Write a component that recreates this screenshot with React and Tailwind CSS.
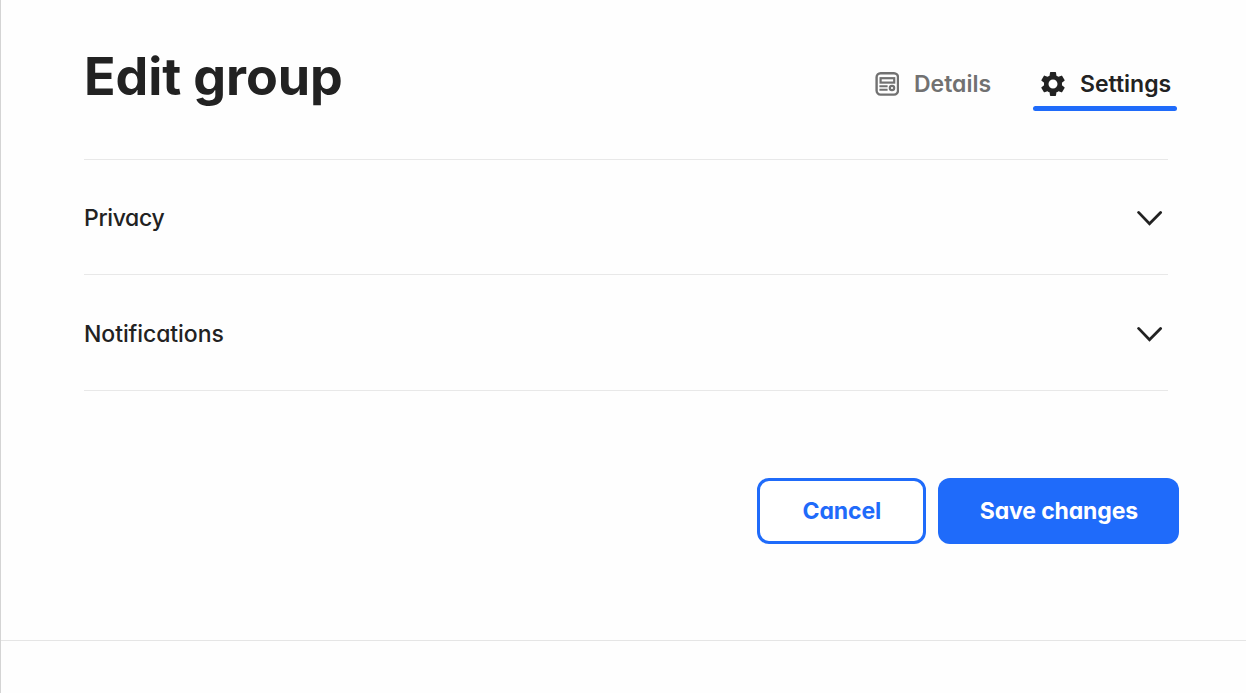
import React from 'react';
import { MdSettings } from 'react-icons/md';

const DetailsIcon = () => (
  <svg width="24" height="24" viewBox="0 0 24 24" fill="none" stroke="currentColor" strokeWidth="2.2" className="shrink-0">
    <rect x="1.6" y="1.2" width="21.4" height="21.4" rx="4" strokeWidth="2.4" />
    <rect x="5.6" y="6.2" width="13.6" height="4.4" />
    <path d="M4.4 14.2h8.2M4.4 17.8h8.2" strokeWidth="2" />
    <circle cx="17" cy="16" r="2.2" strokeWidth="2.2" />
  </svg>
);

const Chevron = () => (
  <svg width="26" height="16" viewBox="0 0 26 16" fill="none" stroke="#222" strokeWidth="2.8" strokeLinecap="round">
    <path d="M1.6 2.4 12.5 13.8 23.6 2.4" />
  </svg>
);

const sections = [
  { label: 'Privacy', row: 'h-[115px] pt-px', text: 'tracking-[-0.35px]' },
  { label: 'Notifications', row: 'h-[116px] pt-[2px]', text: 'tracking-[-0.08px]' },
];

const App = () => {
  return (
    <div className="h-[693px] w-full overflow-hidden border-l border-[#d4d4d4] bg-[#fefefe] font-['Inter',sans-serif] text-[#222] [font-feature-settings:'cv11'_1]">
      <main className="h-[641px] border-b border-[#e5e5e5] pl-[83px]">
        {/* Title and tabs */}
        <header className="flex h-[160px] w-[1084px] justify-between border-b border-[#e8e8e8]">
          <h1 className="mt-[47px] h-[60px] whitespace-nowrap text-[52px] font-bold leading-[60px] tracking-[-0.1px]">
            Edit group
          </h1>
          <nav className="-mr-[9px] mt-[62px] flex h-[49px] gap-[34px] text-[23px] font-semibold leading-[44px]">
            <button className="flex h-[44px] w-[124px] items-center gap-[15px] text-[#717171]">
              <DetailsIcon />
              <span className="whitespace-nowrap">Details</span>
            </button>
            <button className="flex w-[144px] flex-col">
              <span className="flex h-[44px] items-center gap-3 pl-[5px]">
                <MdSettings size={30} className="shrink-0" />
                <span className="whitespace-nowrap">Settings</span>
              </span>
              <span className="h-[5px] w-full rounded-full bg-[#1f6bfa]" />
            </button>
          </nav>
        </header>

        {/* Collapsed sections */}
        {sections.map(({ label, row, text }) => (
          <section key={label} className={`flex w-[1084px] items-center justify-between border-b border-[#e8e8e8] pr-[5px] ${row}`}>
            <h2 className={`text-[23px] font-medium leading-8 ${text}`}>{label}</h2>
            <Chevron />
          </section>
        ))}

        {/* Form actions */}
        <div className="mt-[87px] flex w-[1095.4px] justify-end gap-3 text-[23px] font-bold">
          <button className="h-[66px] w-[169px] rounded-xl border-[3px] border-[#1f6bfa] bg-white text-[#1f6bfa] tracking-[-0.1px]">
            Cancel
          </button>
          <button className="h-[66px] w-[241px] rounded-xl bg-[#1f6bfa] text-white tracking-[-0.15px]">
            Save changes
          </button>
        </div>
      </main>
    </div>
  );
};

export default App;
